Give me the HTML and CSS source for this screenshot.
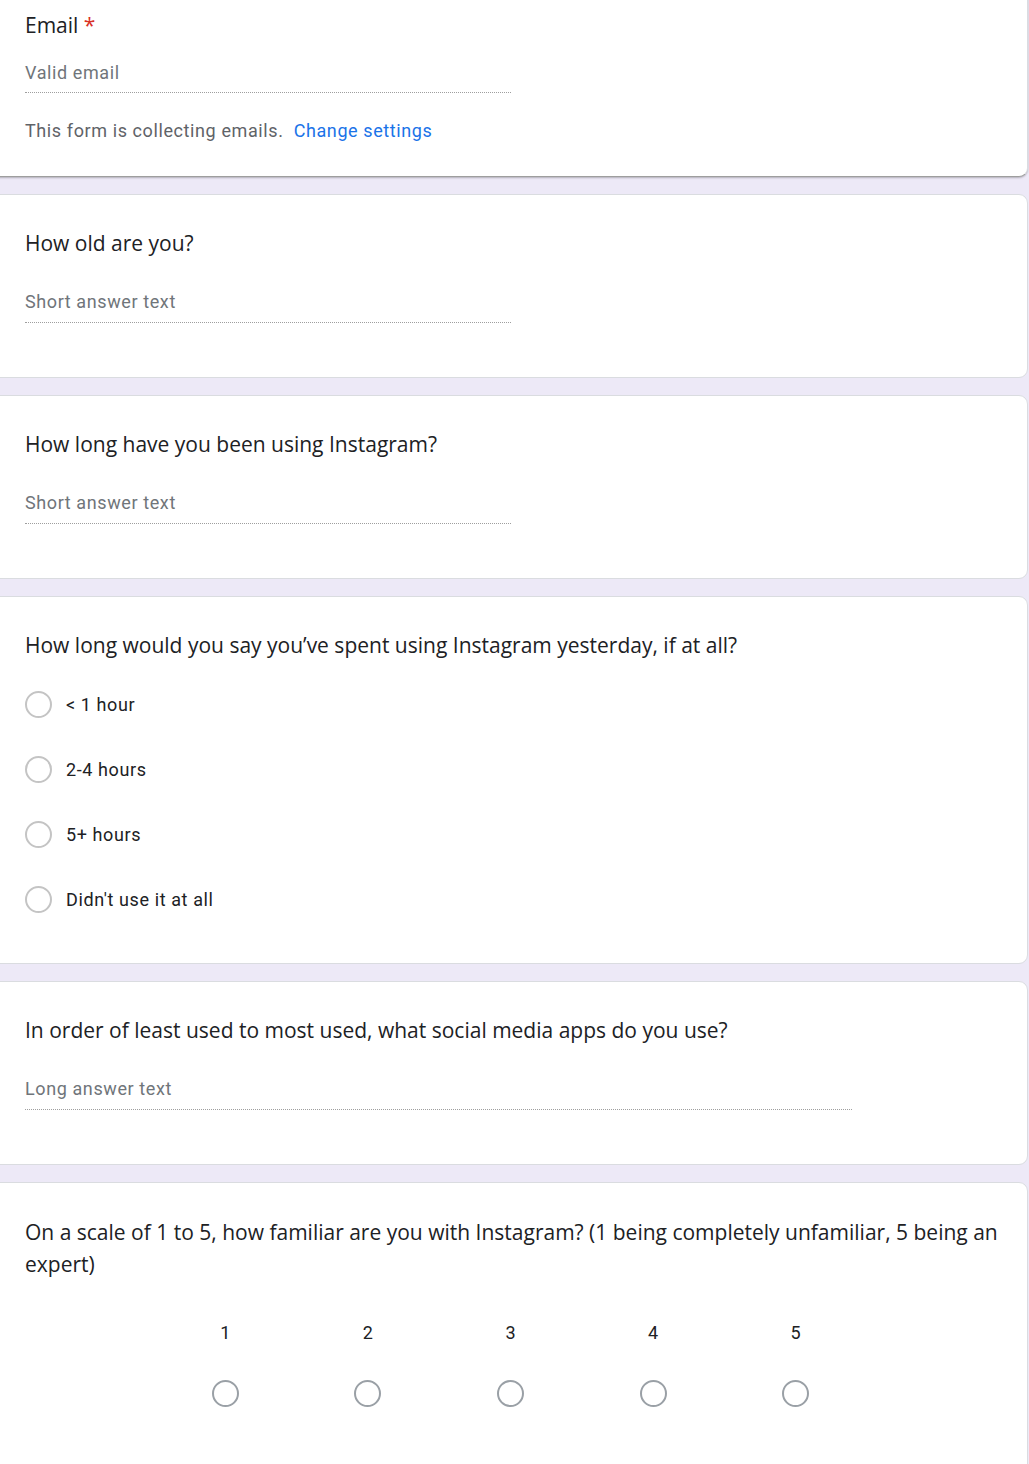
FILE: index.html
```html
<!DOCTYPE html>
<html>
<head>
<meta charset="utf-8">
<link rel="stylesheet" href="styles.css">
</head>
<body>
<div class="form">
  <section class="card card-email">
    <div class="q-title">Email <span class="req">*</span></div>
    <div class="field field-short"><span class="ph">Valid email</span></div>
    <div class="note">This form is collecting emails.&nbsp; <span class="link">Change settings</span></div>
  </section>

  <section class="card">
    <div class="q-title">How old are you?</div>
    <div class="field field-short"><span class="ph">Short answer text</span></div>
  </section>

  <section class="card">
    <div class="q-title">How long have you been using Instagram?</div>
    <div class="field field-short"><span class="ph">Short answer text</span></div>
  </section>

  <section class="card card-options">
    <div class="q-title">How long would you say you’ve spent using Instagram yesterday, if at all?</div>
    <div class="options">
      <div class="option"><span class="radio"></span><span class="opt-label">&lt; 1 hour</span></div>
      <div class="option"><span class="radio"></span><span class="opt-label">2-4 hours</span></div>
      <div class="option"><span class="radio"></span><span class="opt-label">5+ hours</span></div>
      <div class="option"><span class="radio"></span><span class="opt-label">Didn't use it at all</span></div>
    </div>
  </section>

  <section class="card">
    <div class="q-title">In order of least used to most used, what social media apps do you use?</div>
    <div class="field field-long"><span class="ph">Long answer text</span></div>
  </section>

  <section class="card card-scale">
    <div class="q-title q-wrap">On a scale of 1 to 5, how familiar are you with Instagram? (1 being completely unfamiliar, 5 being an expert)</div>
    <div class="scale">
      <div class="scale-col"><span class="num">1</span><span class="radio radio-dark"></span></div>
      <div class="scale-col"><span class="num">2</span><span class="radio radio-dark"></span></div>
      <div class="scale-col"><span class="num">3</span><span class="radio radio-dark"></span></div>
      <div class="scale-col"><span class="num">4</span><span class="radio radio-dark"></span></div>
      <div class="scale-col"><span class="num">5</span><span class="radio radio-dark"></span></div>
    </div>
  </section>
</div>
</body>
</html>
```

FILE: styles.css
```css
html, body {
  margin: 0;
  padding: 0;
  background: #ede9f7;
}
body {
  width: 1029px;
  height: 1464px;
  overflow: hidden;
  font-family: Roboto, "Liberation Sans", sans-serif;
  color: #202124;
}
.form {
  display: flex;
  flex-direction: column;
  gap: 17px;
  margin-left: -12px;
  margin-top: -12px;
}
.card {
  width: 1040px;
  box-sizing: border-box;
  background: #fff;
  border: 1px solid #dadce0;
  border-radius: 9px;
  padding: 33px 24px 54px 36px;
}
.card-email {
  padding-top: 21px;
  padding-bottom: 33px;
  border-bottom: 1px solid #9e9e9e;
  box-shadow: 0 1px 2px rgba(0,0,0,0.25);
}
.q-title {
  font-family: "Open Sans", sans-serif;
  font-size: 21px;
  line-height: 30px;
  letter-spacing: 0;
  color: #202124;
}
.q-wrap {
  line-height: 32px;
}
.req {
  color: #d93025;
}
.field {
  margin-top: 32px;
  padding-bottom: 8px;
  border-bottom: 1px dotted #9e9e9e;
  line-height: 24px;
  font-size: 18px;
  letter-spacing: 0.6px;
}
.card-email .field {
  margin-top: 21px;
  padding-bottom: 7px;
}
.field-short {
  width: 486px;
}
.field-long {
  width: 827px;
}
.ph {
  color: #70757a;
}
.note {
  margin-top: 26px;
  font-size: 18px;
  letter-spacing: 0.6px;
  line-height: 24px;
  color: #5f6368;
}
.link {
  color: #1a73e8;
}
.card-options {
  padding-bottom: 44px;
}
.options {
  display: flex;
  flex-direction: column;
  gap: 25px;
  margin-top: 24px;
}
.option {
  display: flex;
  align-items: center;
  height: 40px;
}
.radio {
  width: 27px;
  height: 27px;
  box-sizing: border-box;
  border: 2px solid #c4c4c4;
  border-radius: 50%;
  flex: none;
}
.radio-dark {
  border-color: #9aa0a6;
}
.opt-label {
  margin-left: 14px;
  font-size: 18px;
  letter-spacing: 0.6px;
  color: #202124;
}
.scale {
  display: flex;
  padding-left: 129px;
  margin-top: 41px;
}
.scale-col {
  width: 142.6px;
  display: flex;
  flex-direction: column;
  align-items: center;
  gap: 35px;
}
.num {
  font-size: 18px;
  line-height: 24px;
}
.card-scale {
  padding-bottom: 80px;
}
```
